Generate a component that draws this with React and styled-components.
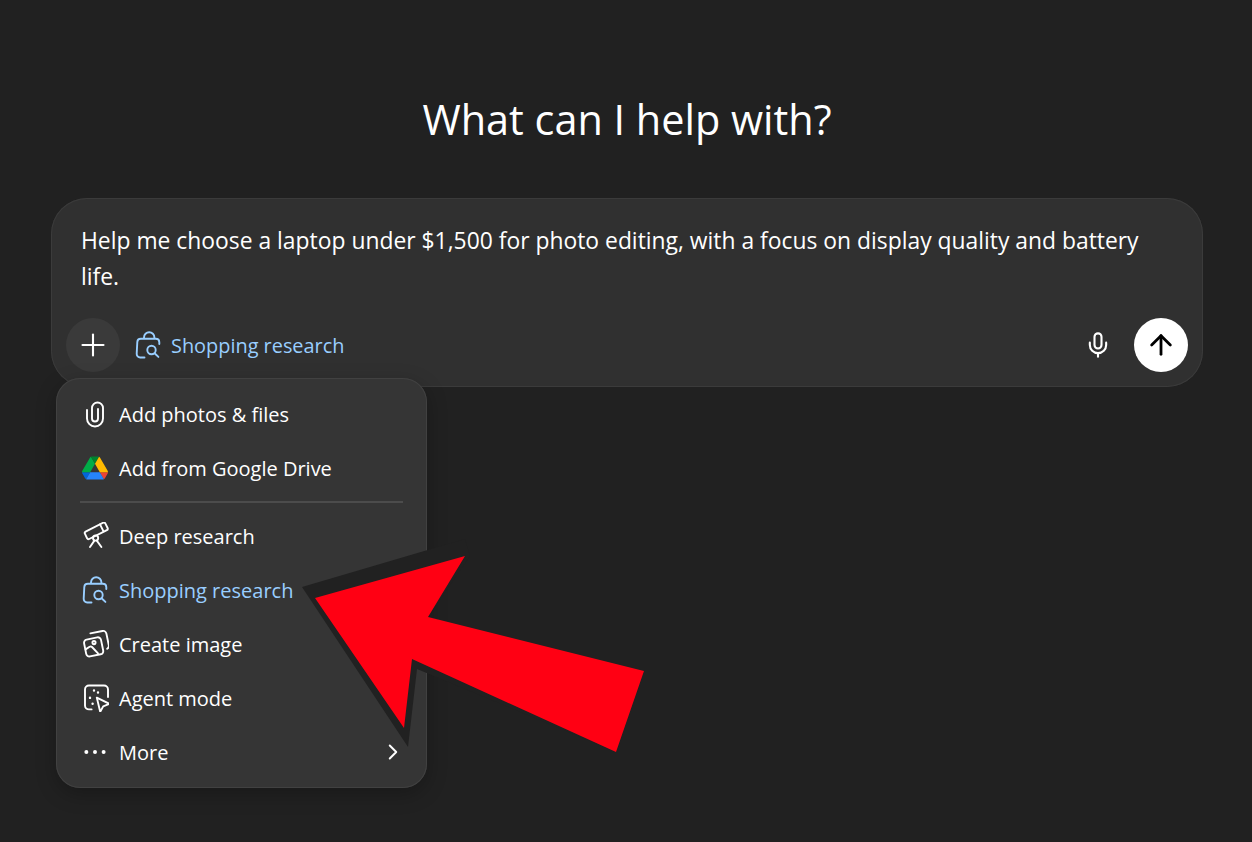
import React from "react";
import styled, { createGlobalStyle } from "styled-components";
import { Plus, Mic, ArrowUp, ChevronRight } from "lucide-react";

const GlobalStyle = createGlobalStyle`
  html, body {
    margin: 0;
    padding: 0;
    background: #212121;
  }
  body {
    font-family: "Open Sans", "Noto Sans", sans-serif;
    color: #fff;
  }
`;

const BLUE = "#99ceff";

// all menu glyphs share one 28px box, drawn 1:1 in px
const Glyph = ({ box = "5 5 28 28", children }) => (
  <svg width="28" height="28" viewBox={box} fill="none" stroke="currentColor" strokeWidth="1.9" strokeLinecap="round" strokeLinejoin="round">
    {children}
  </svg>
);

const ShoppingIcon = () => (
  <Glyph box="6 5 28 28">
    <path d="M16 12v-.6a5.2 5.2 0 0 1 10.4 0v.6" />
    <path d="M16.5 31.5H12.2a3.5 3.5 0 0 1-3.5-3.7L9.3 16a3.5 3.5 0 0 1 3.5-3.3h15a3.5 3.5 0 0 1 3.5 3.3v2" />
    <circle cx="23.5" cy="24" r="4.2" />
    <path d="M26.6 27.2l3.8 3.7" />
  </Glyph>
);

const ClipIcon = () => (
  <Glyph>
    <path d="M11 15v8.5a8 8 0 0 0 16 0V13a5.5 5.5 0 0 0-11 0v10.5a3 3 0 0 0 6 0V14" />
  </Glyph>
);

const DriveIcon = () => (
  <svg width="26" height="24" viewBox="0 0 87.3 78">
    <path d="m6.6 66.85 3.85 6.65c.8 1.4 1.95 2.5 3.3 3.3l13.75-23.8h-27.5c0 1.55.4 3.1 1.2 4.5z" fill="#0066da" />
    <path d="m43.65 25-13.75-23.8c-1.35.8-2.5 1.9-3.3 3.3l-25.4 44a9.06 9.06 0 0 0 -1.2 4.5h27.5z" fill="#00ac47" />
    <path d="m73.55 76.8c1.35-.8 2.5-1.9 3.3-3.3l1.6-2.75 7.65-13.25c.8-1.4 1.2-2.95 1.2-4.5h-27.502l5.852 11.5z" fill="#ea4335" />
    <path d="m43.65 25 13.75-23.8c-1.35-.8-2.9-1.2-4.5-1.2h-18.5c-1.6 0-3.15.45-4.5 1.2z" fill="#00832d" />
    <path d="m59.8 53h-32.3l-13.75 23.8c1.35.8 2.9 1.2 4.5 1.2h50.8c1.6 0 3.15-.45 4.5-1.2z" fill="#2684fc" />
    <path d="m73.4 26.5-12.7-22c-.8-1.4-1.95-2.5-3.3-3.3l-13.75 23.8 16.15 28h27.45c0-1.55-.4-3.1-1.2-4.5z" fill="#ffba00" />
  </svg>
);

const TelescopeIcon = () => (
  <Glyph>
    <path d="M9.6 14.6l17.6-8.9a1.6 1.6 0 0 1 2.1.7l2.3 4.6a1.6 1.6 0 0 1-.7 2.1l-17.7 8.9a1.6 1.6 0 0 1-2.1-.7l-2.2-4.6a1.6 1.6 0 0 1 .7-2.1z" />
    <path d="M24 7.4l3.4 6.7" />
    <circle cx="19.6" cy="21" r="2.6" />
    <path d="M18.4 23.6L14 30M20.8 23.6L25.4 30" />
  </Glyph>
);

const ImageIcon = () => (
  <Glyph>
    <path d="M14.4 8.4l12-2.4a3.4 3.4 0 0 1 4 2.6l2.4 11.6a3.4 3.4 0 0 1-1.6 3.6" />
    <path d="M10.6 14.6l10.6-2.2a3.2 3.2 0 0 1 3.8 2.5l2.2 10.6a3.2 3.2 0 0 1-2.5 3.8L14 31.4a3.2 3.2 0 0 1-3.8-2.5L8.1 18.4a3.2 3.2 0 0 1 2.5-3.8z" />
    <path d="M9.6 24.4l4-2.6a2 2 0 0 1 2.4.2l6 6.4" />
    <circle cx="18" cy="17.6" r="1.6" />
  </Glyph>
);

const AgentIcon = () => (
  <Glyph>
    <path d="M15.6 30.4H13a4 4 0 0 1-4-4V10.5a4 4 0 0 1 4-4h15a4 4 0 0 1 4 4v7.5" />
    <path d="M20.8 18.6l12.6 6.2-6.2 2.6-3 5.4z" />
    <path d="M18 11.5v.1M22 13.4v.1M14 18.8v.1M16.6 24.6v.1" strokeWidth="2.4" />
  </Glyph>
);

const DotsIcon = () => (
  <svg width="28" height="28" viewBox="0 0 24 24" fill="currentColor">
    <circle cx="4.6" cy="12" r="1.7" />
    <circle cx="12" cy="12" r="1.7" />
    <circle cx="19.4" cy="12" r="1.7" />
  </svg>
);

const menuItems = [
  { label: "Add photos & files", icon: <ClipIcon /> },
  { label: "Add from Google Drive", icon: <DriveIcon />, divider: true },
  { label: "Deep research", icon: <TelescopeIcon /> },
  { label: "Shopping research", icon: <ShoppingIcon />, active: true },
  { label: "Create image", icon: <ImageIcon /> },
  { label: "Agent mode", icon: <AgentIcon /> },
  { label: "More", icon: <DotsIcon />, more: true },
];

export default function App() {
  return (
    <>
      <GlobalStyle />
      <Page>
        <Title>What can I help with?</Title>
        <Composer>
          <Prompt>
            Help me choose a laptop under $1,500 for photo editing, with a focus on display quality and battery life.
          </Prompt>
          <Toolbar>
            <PlusButton>
              <Plus size={36} strokeWidth={1.4} />
            </PlusButton>
            <Pill>
              <ShoppingIcon />
              <span>Shopping research</span>
            </Pill>
            <MicButton>
              <Mic size={28} strokeWidth={1.8} />
            </MicButton>
            <SendButton>
              <ArrowUp size={32} strokeWidth={2.1} />
            </SendButton>
          </Toolbar>
          <Menu>
            {menuItems.map((item) => (
              <React.Fragment key={item.label}>
                <MenuRow $active={item.active}>
                  <IconSlot>{item.icon}</IconSlot>
                  <RowLabel>{item.label}</RowLabel>
                  {item.more && <MoreChevron size={26} strokeWidth={1.8} />}
                </MenuRow>
                {item.divider && <Divider />}
              </React.Fragment>
            ))}
          </Menu>
        </Composer>
        <Arrow viewBox="295 530 360 230">
          <polygon points="302,587 465,539 470,556 428,617 644,671 616,752 417,669 408,747" fill="#212121" />
          <polygon points="315,598 465,556 428,617 644,671 616,752 412,659 404,728" fill="#ff0013" />
        </Arrow>
      </Page>
    </>
  );
}

const Page = styled.div`
  position: relative;
  box-sizing: border-box;
  height: 842px;
  padding: 91px 49px 0 51px;
  overflow: hidden;
  background: #212121;
`;

const Title = styled.h1`
  margin: 0 0 51px;
  font-size: 41.4px;
  line-height: 56px;
  font-weight: 400;
  text-align: center;
`;

const Composer = styled.div`
  position: relative;
  box-sizing: border-box;
  height: 189px;
  padding: 25px 15px 15px;
  border-radius: 36px;
  background: #303030;
  box-shadow: inset 0 0 0 1px #3b3b3b;
`;

const Prompt = styled.div`
  padding: 0 15px;
  height: 72px;
  font-size: 22.87px;
  line-height: 36px;
`;

const Toolbar = styled.div`
  display: flex;
  align-items: center;
  margin-top: 23px;
`;

const PlusButton = styled.div`
  display: flex;
  align-items: center;
  justify-content: center;
  width: 54px;
  height: 54px;
  border-radius: 50%;
  background: #3a3a3a;
`;

const Pill = styled.div`
  display: flex;
  align-items: center;
  gap: 9px;
  margin-left: 14px;
  font-size: 19.9px;
  color: ${BLUE};
`;

const MicButton = styled.div`
  display: flex;
  margin-left: auto;
  margin-right: 22px;
`;

const SendButton = styled.div`
  display: flex;
  align-items: center;
  justify-content: center;
  width: 54px;
  height: 54px;
  border-radius: 50%;
  background: #fff;
  color: #000;
`;

const Menu = styled.div`
  position: absolute;
  left: 5px;
  top: 180px;
  box-sizing: border-box;
  width: 371px;
  height: 410px;
  padding: 9px 24px 9px 25px;
  border-radius: 24px;
  background: #353535;
  box-shadow: inset 0 0 0 1px #414141, 0 6px 20px rgba(0, 0, 0, 0.25);
`;

const MenuRow = styled.div`
  display: flex;
  align-items: center;
  height: 54px;
  color: ${(p) => (p.$active ? BLUE : "#fff")};
`;

const IconSlot = styled.div`
  display: flex;
  align-items: center;
  justify-content: center;
  width: 28px;
  margin-right: 10px;
`;

const RowLabel = styled.span`
  flex: 1;
  font-size: 20px;
`;

const MoreChevron = styled(ChevronRight)`
  margin-right: -3px;
`;

const Divider = styled.div`
  height: 2px;
  margin: 6px 0 6px -1px;
  background: #4c4c4c;
`;

const Arrow = styled.svg`
  position: absolute;
  left: 295px;
  top: 530px;
  width: 360px;
  height: 230px;
`;
